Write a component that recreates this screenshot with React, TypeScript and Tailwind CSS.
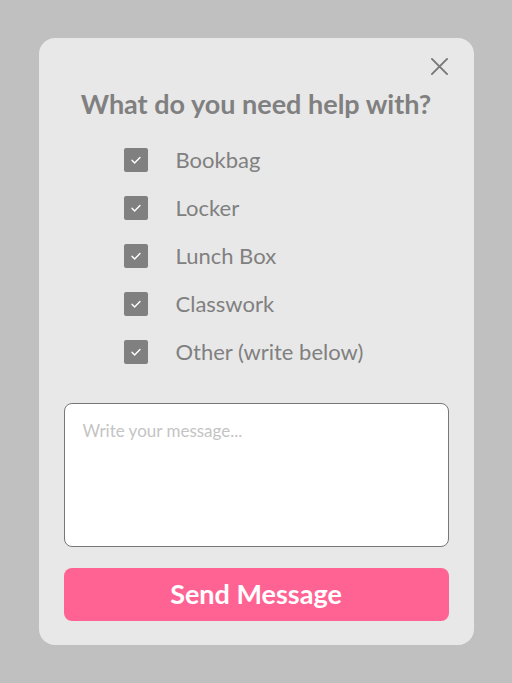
import React from "react";

const items = ["Bookbag", "Locker", "Lunch Box", "Classwork", "Other (write below)"];

function Check() {
  return (
    <span className="flex h-[24px] w-[24px] shrink-0 items-center justify-center rounded-[2px] bg-[#808080]">
      <svg width="14" height="14" viewBox="0 0 14 14" fill="none">
        <path d="M3 7.3l2.6 2.6L11 4.6" stroke="#ffffff" strokeWidth="1.4" strokeLinecap="round" strokeLinejoin="round" />
      </svg>
    </span>
  );
}

export default function App() {
  return (
    <div className="flex min-h-[683px] w-full items-start justify-center bg-[#c0c0c0] pt-[38px]" style={{ fontFamily: "Lato, 'Open Sans', sans-serif" }}>
      <div className="relative flex w-[435px] flex-col rounded-[16px] bg-[#e8e8e8] px-[25px] pb-[24px] pt-[50px]">
        <button className="absolute right-[22px] top-[16px] flex h-[24px] w-[24px] items-center justify-center">
          <svg width="19" height="19" viewBox="0 0 20 20" fill="none">
            <path d="M2 2L18 18M18 2L2 18" stroke="#777777" strokeWidth="2" strokeLinecap="round" />
          </svg>
        </button>
        <h1 className="text-center text-[27px] font-bold leading-[32px] text-[#808080]">What do you need help with?</h1>
        <ul className="ml-[60px] mt-[28px] flex flex-col gap-[24px]">
          {items.map((it) => (
            <li key={it} className="flex h-[24px] items-center gap-[28px]">
              <Check />
              <span className="text-[22px] leading-[24px] text-[#808080]">{it}</span>
            </li>
          ))}
        </ul>
        <textarea
          placeholder="Write your message..."
          className="mt-[39px] h-[144px] w-full resize-none rounded-[8px] border border-[#777777] bg-white px-[18px] py-[14px] text-[17px] text-[#555] placeholder:text-[#c4c4c4] outline-none"
        />
        <button className="mt-[21px] flex h-[53px] w-full items-center justify-center rounded-[8px] bg-[#ff6394] text-[27px] font-bold text-white">
          Send Message
        </button>
      </div>
    </div>
  );
}
